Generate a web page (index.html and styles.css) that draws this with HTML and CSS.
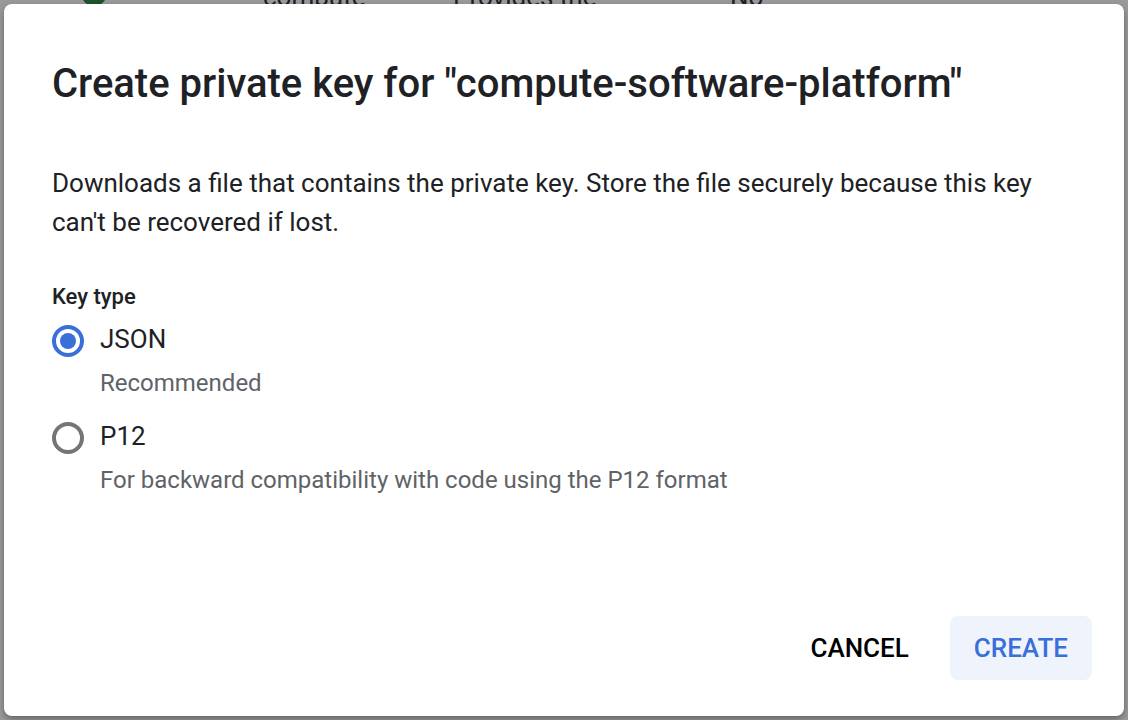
FILE: index.html
```html
<!DOCTYPE html>
<html>
<head>
<meta charset="utf-8">
<link rel="stylesheet" href="styles.css">
</head>
<body>
<div class="page-behind">
  <div class="behind-row">
    <span class="behind-icon"></span>
    <span class="behind-cell c1">compute</span>
    <span class="behind-cell c2">Provides the</span>
    <span class="behind-cell c3">No</span>
  </div>
</div>
<div class="scrim"></div>
<div class="dialog">
  <h1 class="title">Create private key for "compute-software-platform"</h1>
  <p class="desc">Downloads a file that contains the private key. Store the file securely because this key can't be recovered if lost.</p>
  <div class="field-label">Key type</div>
  <div class="options">
    <label class="option">
      <span class="radio checked"><span class="dot"></span></span>
      <span class="option-text">
        <span class="option-name">JSON</span>
        <span class="option-hint">Recommended</span>
      </span>
    </label>
    <label class="option">
      <span class="radio"></span>
      <span class="option-text">
        <span class="option-name">P12</span>
        <span class="option-hint">For backward compatibility with code using the P12 format</span>
      </span>
    </label>
  </div>
  <div class="actions">
    <button class="btn btn-cancel">CANCEL</button>
    <button class="btn btn-create">CREATE</button>
  </div>
</div>
</body>
</html>
```
FILE: styles.css
```css
html, body {
  margin: 0;
  padding: 0;
  width: 1128px;
  height: 720px;
  overflow: hidden;
}
body {
  background: #ffffff;
  font-family: Roboto, "Liberation Sans", sans-serif;
  position: relative;
}
.page-behind {
  position: absolute;
  left: 0;
  top: -18px;
  width: 1128px;
}
.behind-row {
  position: relative;
  height: 30px;
  font-size: 26px;
  line-height: 30px;
  color: #202124;
}
.behind-icon {
  position: absolute;
  left: 81px;
  top: -2px;
  width: 26px;
  height: 26px;
  border-radius: 50%;
  background: #188038;
}
.behind-cell { position: absolute; top: 0; }
.c1 { left: 263px; }
.c2 { left: 453px; }
.c3 { left: 730px; }
.scrim {
  position: absolute;
  inset: 0;
  background: rgba(30, 31, 35, 0.45);
}
.dialog {
  position: absolute;
  left: 4px;
  top: 4px;
  width: 1120px;
  height: 712px;
  box-sizing: border-box;
  background: #fff;
  border-radius: 8px;
  box-shadow: 0 3px 6px rgba(0,0,0,0.35);
  padding: 56px 48px 0 48px;
  display: flex;
  flex-direction: column;
}
.title {
  margin: 0;
  font-size: 40px;
  font-weight: 500;
  line-height: 48px;
  color: #202124;
}
.desc {
  margin: 56px 0 0 0;
  font-size: 26px;
  line-height: 39px;
  color: #202124;
}
.field-label {
  margin-top: 40px;
  font-size: 22px;
  font-weight: 500;
  line-height: 30px;
  color: #202124;
}
.options {
  display: flex;
  flex-direction: column;
  gap: 21px;
  margin-top: 11px;
}
.option {
  display: flex;
  gap: 16px;
  align-items: flex-start;
}
.radio {
  margin-top: 2px;
  width: 32px;
  height: 32px;
  box-sizing: border-box;
  border: 4px solid #757575;
  border-radius: 50%;
  display: flex;
  align-items: center;
  justify-content: center;
  flex: none;
}
.radio.checked { border-color: #3b6fd8; }
.dot {
  width: 16px;
  height: 16px;
  border-radius: 50%;
  background: #3b6fd8;
}
.option-text {
  display: flex;
  flex-direction: column;
}
.option-name {
  font-size: 26px;
  line-height: 32px;
  color: #202124;
}
.option-hint {
  margin-top: 12px;
  font-size: 24px;
  line-height: 32px;
  color: #5f6368;
}
.actions {
  margin-top: auto;
  margin-bottom: 36px;
  display: flex;
  justify-content: flex-end;
  gap: 17px;
  margin-right: -16px;
}
.btn {
  font-family: Roboto, "Liberation Sans", sans-serif;
  font-size: 26px;
  font-weight: 500;
  border: none;
  border-radius: 8px;
  height: 64px;
  padding: 0 24px;
  background: transparent;
}
.btn-cancel { color: #000; }
.btn-create {
  background: #eff3fc;
  color: #3b6fd8;
}
```
